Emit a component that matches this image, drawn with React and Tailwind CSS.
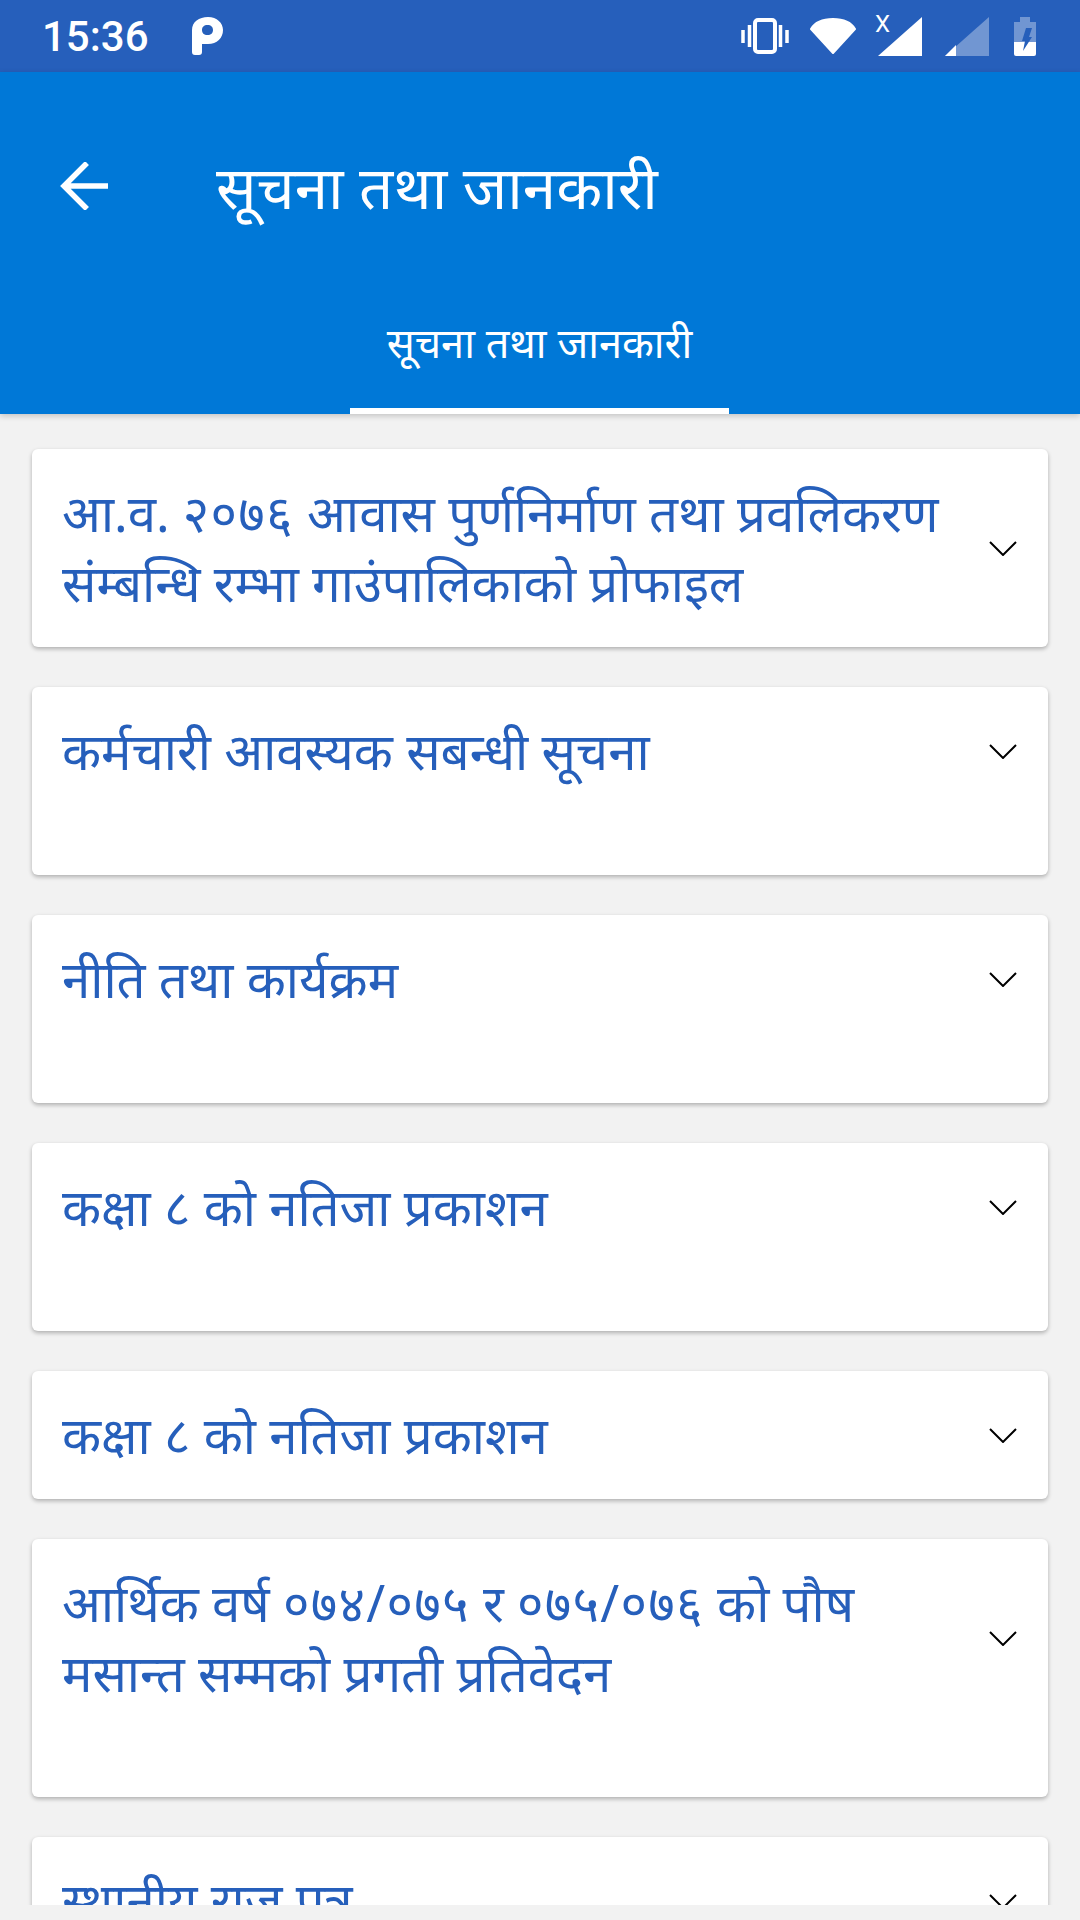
import React from 'react'

const digits = 'tracking-[1.3px]'

const items = [
  { text: <>आ.व. <span className={digits}>२०७६</span> आवास पुर्णनिर्माण तथा प्रवलिकरण संम्बन्धि रम्भा गाउंपालिकाको प्रोफाइल</>, h: 'h-[198px]' },
  { text: 'कर्मचारी आवस्यक सबन्धी सूचना', h: 'h-[188px]' },
  { text: 'नीति तथा कार्यक्रम', h: 'h-[188px]' },
  { text: 'कक्षा ८ को नतिजा प्रकाशन', h: 'h-[188px]' },
  { text: 'कक्षा ८ को नतिजा प्रकाशन', h: 'h-[128px]' },
  { text: <>आर्थिक वर्ष <span className={digits}>०७४/०७५</span> र <span className={digits}>०७५/०७६</span> को पौष मसान्त सम्मको प्रगती प्रतिवेदन</>, h: 'h-[258px]', pr: true },
  { text: 'स्थानीय राज पत्र', h: 'h-[188px]' },
]

function Chevron() {
  return (
    <svg width="28" height="15" viewBox="0 0 28 15" fill="none" stroke="black" strokeWidth="2">
      <path d="M1 1 L14 14 L27 1" />
    </svg>
  )
}

function StatusBar() {
  return (
    <div className="h-[72px] shrink-0 bg-[#265fbb] flex items-center pl-[42px] pr-[44px] text-white">
      <span className="text-[42px] font-medium leading-[72px] pt-[2px] font-['Roboto',sans-serif]">15:36</span>
      <svg className="ml-[43px]" width="31" height="38" viewBox="0 0 31 38">
        <path fill="white" fillRule="evenodd" d="M0 13 C0 5 7 0 16 0 C25 0 31 6 31 13 C31 21 25 27 16 27 H10 V35 Q10 38 7 38 H3 Q0 38 0 35 Z M10 13 C10 16 12 18 15.500 18 C19 18 21 16 21 13 C21 10 19 8 15.500 8 C12 8 10 10 10 13 Z" />
      </svg>
      <div className="ml-auto flex items-center">
        <svg width="48" height="36" viewBox="0 0 48 36" fill="none" stroke="white">
          <rect x="14" y="2" width="20" height="32" rx="3" strokeWidth="4" />
          <path d="M8.500 7 V29 M2 12 V25 M39.500 7 V29 M46 12 V25" strokeWidth="3.500" />
        </svg>
        <svg className="ml-[21px]" width="46" height="36" viewBox="0 0 46 36">
          <path fill="white" stroke="white" strokeWidth="2" strokeLinejoin="round" d="M23 35 L1 11 C5 4 13 1 23 1 C33 1 41 4 45 11 Z" />
        </svg>
        <div className="relative ml-[22px] w-[44px] h-[39px]">
          <span className="absolute left-[-3px] top-[-5px] text-[24px] leading-[24px] font-['Roboto',sans-serif]">X</span>
          <svg className="absolute left-0 top-0" width="44" height="39" viewBox="0 0 44 39">
            <path fill="white" d="M44 0 V39 H0 Z" />
          </svg>
        </div>
        <svg className="ml-[23px]" width="44" height="39" viewBox="0 0 44 39">
          <path fill="white" fillOpacity="0.35" d="M44 0 V39 H0 Z" />
          <path fill="white" d="M0 39 L11 28 V39 Z" />
        </svg>
        <svg className="ml-[25px]" width="22" height="39" viewBox="0 0 22 39">
          <path fill="white" fillOpacity="0.35" d="M6 0 H16 V5 H22 V25 H0 V5 H6 Z" />
          <path fill="white" d="M0 25 H22 V37 Q22 39 20 39 H2 Q0 39 0 37 Z" />
          <path fill="#265fbb" d="M12 11 H18 L15 20 H18 L9 34 L11 24 H8 Z" />
        </svg>
      </div>
    </div>
  )
}

function Card({ text, h, pr }) {
  return (
    <div className={`${h} shrink-0 bg-white rounded-[6px] shadow-[0_2px_4px_rgba(0,0,0,0.28)] pl-[30px] pr-[31px] pt-[29px]`}>
      <div className="flex items-center">
        <div className={`flex-1 text-[#265fbb] text-[50.900px] leading-[70px] ${pr ? 'pr-[100px]' : 'pr-[20px]'}`}>{text}</div>
        <Chevron />
      </div>
    </div>
  )
}

export default function App() {
  return (
    <div className="w-[1080px] h-[1920px] overflow-hidden flex flex-col bg-[#f2f2f2] font-['Noto_Sans','Liberation_Sans',sans-serif]">
      <StatusBar />
      <div className="relative h-[342px] shrink-0 bg-[#0078d7] flex flex-col text-white shadow-[0_2px_6px_rgba(0,0,0,0.2)]">
        <div className="flex items-center pl-[60px] pt-[76px]">
          <svg width="48" height="48" viewBox="0 0 48 48" fill="none" stroke="white" strokeWidth="5.500">
            <path d="M48 24 H4 M27 1 L4 24 L27 47" />
          </svg>
          <span className="ml-[108px] text-[60px] leading-[76px]">सूचना तथा जानकारी</span>
        </div>
        <div className="flex justify-center mt-auto">
          <div className="-ml-[1px] w-[379px] h-[110px] border-b-[6px] border-white flex justify-center pt-[8px] text-[41.500px] leading-[60px]">
            <span className="whitespace-nowrap">सूचना तथा जानकारी</span>
          </div>
        </div>
      </div>
      <div className="h-[1491px] shrink-0 overflow-hidden px-[32px] pt-[35px] flex flex-col gap-[40px]">
        {items.map((item, i) => <Card key={i} {...item} />)}
      </div>
    </div>
  )
}
